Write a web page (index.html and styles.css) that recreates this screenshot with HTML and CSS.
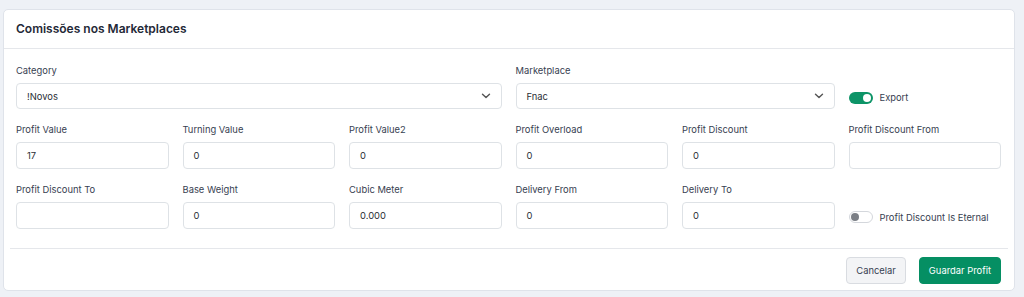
FILE: index.html
```html
<!DOCTYPE html>
<html lang="pt">
<head>
<meta charset="utf-8">
<link rel="stylesheet" href="styles.css">
</head>
<body>
<div class="card">
  <div class="card-header">Comissões nos Marketplaces</div>
  <div class="card-body">
    <div class="grid">
      <div class="field span3">
        <label>Category</label>
        <div class="select"><span>!Novos</span><svg width="10" height="6" viewBox="0 0 10 6"><path d="M1.5 1.2L5 4.6L8.5 1.2" fill="none" stroke="#555" stroke-width="1.4" stroke-linecap="round" stroke-linejoin="round"/></svg></div>
      </div>
      <div class="field span2">
        <label>Marketplace</label>
        <div class="select"><span>Fnac</span><svg width="10" height="6" viewBox="0 0 10 6"><path d="M1.5 1.2L5 4.6L8.5 1.2" fill="none" stroke="#555" stroke-width="1.4" stroke-linecap="round" stroke-linejoin="round"/></svg></div>
      </div>
      <div class="switch-cell">
        <span class="switch on"><span class="knob"></span></span>
        <span class="switch-label">Export</span>
      </div>

      <div class="field"><label>Profit Value</label><div class="input">17</div></div>
      <div class="field"><label>Turning Value</label><div class="input">0</div></div>
      <div class="field"><label>Profit Value2</label><div class="input">0</div></div>
      <div class="field"><label>Profit Overload</label><div class="input">0</div></div>
      <div class="field"><label>Profit Discount</label><div class="input">0</div></div>
      <div class="field"><label>Profit Discount From</label><div class="input"></div></div>

      <div class="field"><label>Profit Discount To</label><div class="input"></div></div>
      <div class="field"><label>Base Weight</label><div class="input">0</div></div>
      <div class="field"><label>Cubic Meter</label><div class="input">0.000</div></div>
      <div class="field"><label>Delivery From</label><div class="input">0</div></div>
      <div class="field"><label>Delivery To</label><div class="input">0</div></div>
      <div class="switch-cell">
        <span class="switch off"><span class="knob"></span></span>
        <span class="switch-label">Profit Discount Is Eternal</span>
      </div>
    </div>
  </div>
  <div class="card-footer">
    <button class="btn btn-light">Cancelar</button>
    <button class="btn btn-primary">Guardar Profit</button>
  </div>
</div>
</body>
</html>
```
FILE: styles.css
```css
* { box-sizing: border-box; }
html, body { height: 100%; }
body {
  margin: 0;
  padding: 9px 9px 6px 3px;
  background: #eef1f6;
  font-family: Inter, "Noto Sans", sans-serif;
  color: #374151;
}
.card {
  background: #fff;
  border: 1px solid #dfe3ea;
  border-radius: 5px;
  height: 282px;
}
.card-header {
  height: 39px;
  border-bottom: 1px solid #e5e7eb;
  padding: 11px 12px 0 12px;
  font-size: 12px;
  font-weight: 600;
  color: #1f2937;
}
.card-body {
  padding: 16px 13px 0 12px;
  height: 199px;
}
.grid {
  display: grid;
  grid-template-columns: repeat(6, 1fr);
  column-gap: 14px;
  row-gap: 15px;
}
.span3 { grid-column: span 3; }
.span2 { grid-column: span 2; }
.field label {
  display: block;
  font-size: 9.4px;
  color: #374151;
  line-height: 12px;
  margin-bottom: 6px;
}
.select, .input {
  height: 27px;
  border: 1px solid #dee2e6;
  border-radius: 4px;
  font-size: 9.4px;
  color: #2b3036;
  display: flex;
  align-items: center;
  padding: 0 10px;
}
.select { justify-content: space-between; height: 26px; }
.switch-cell {
  display: flex;
  align-items: center;
  gap: 7px;
  padding-top: 21px;
  padding-left: 0;
}
.switch {
  width: 24px;
  height: 12px;
  border-radius: 6px;
  position: relative;
  flex: none;
}
.switch.on { background: #0d9467; }
.switch.off { background: #fff; border: 1px solid #d4d7dc; }
.switch .knob {
  position: absolute;
  width: 8px;
  height: 8px;
  border-radius: 50%;
  top: 2px;
}
.switch.on .knob { background: #fff; right: 2px; }
.switch.off .knob { background: #7b7f86; left: 1px; top: 1px; }
.switch-label { font-size: 9.4px; color: #374151; }
.card-footer {
  margin: 0 6px;
  border-top: 1px solid #e5e7eb;
  display: flex;
  justify-content: flex-end;
  gap: 13px;
  padding: 8px 7px 0 0;
}
.btn {
  font-family: inherit;
  font-size: 9.4px;
  height: 27px;
  border-radius: 4px;
  padding: 0 9px;
  cursor: pointer;
}
.btn-light {
  background: #f3f4f6;
  border: 1px solid #d9dce1;
  color: #374151;
}
.btn-primary {
  background: #058f63;
  border: 1px solid #058f63;
  color: #fff;
}
```
